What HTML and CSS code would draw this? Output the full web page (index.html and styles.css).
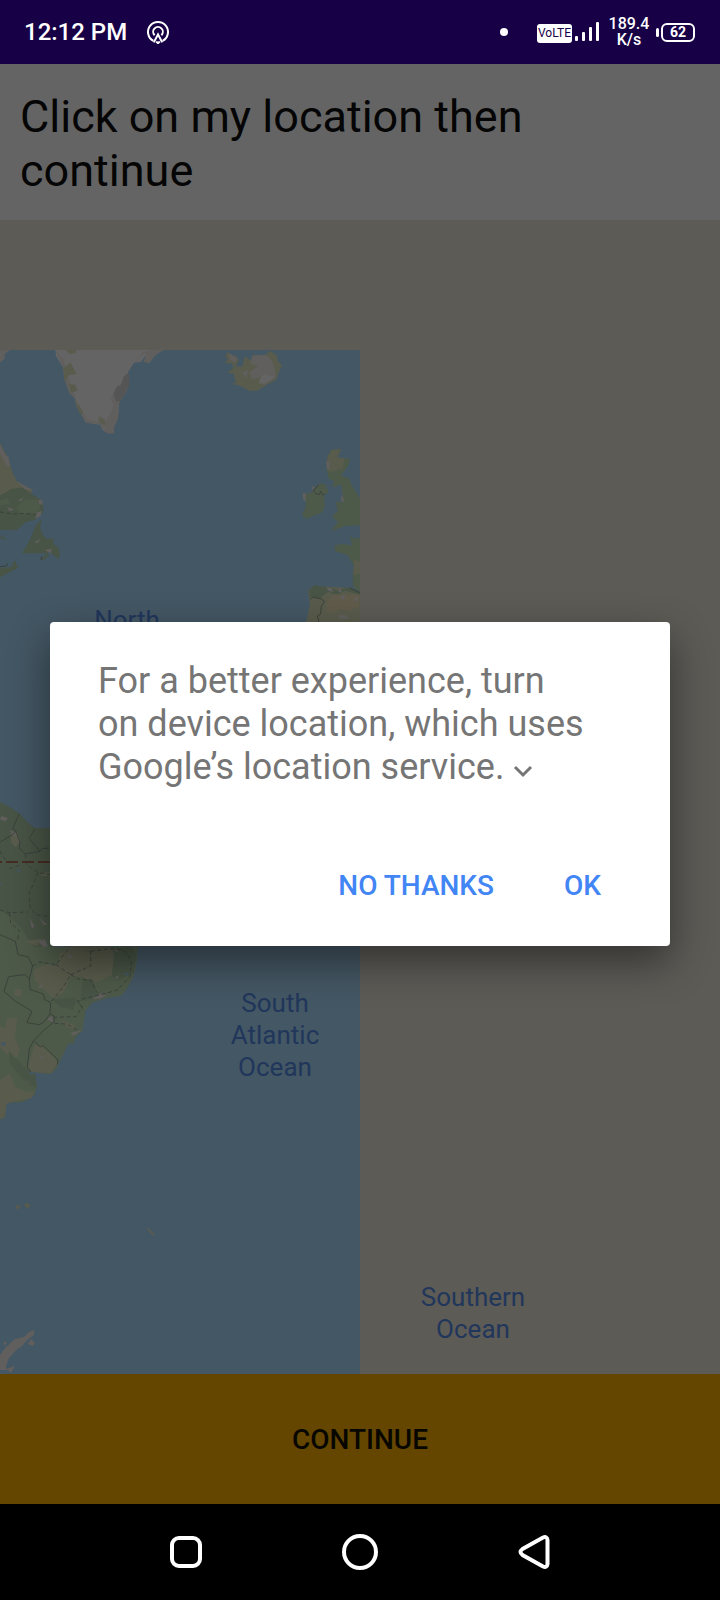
FILE: index.html
```html
<!DOCTYPE html>
<html lang="en">
<head>
<meta charset="utf-8">
<meta name="viewport" content="width=device-width, initial-scale=1">
<title>Choose location</title>
<link rel="stylesheet" href="styles.css">
</head>
<body>
<div class="screen">
  <div class="status">
    <span class="status-time">12:12 PM</span>
    <svg class="status-cast" width="24" height="24" viewBox="0 0 24 24" fill="none" stroke="#fff" stroke-width="2">
      <path d="M7.400 20.800A10 10 0 1 1 16.600 20.800"/>
      <path d="M8.600 15.200A4.800 4.800 0 1 1 15.400 15.200"/>
      <path d="M7.800 22.400 12 14.500l4.200 7.900M10.200 21.600l1.800 1.600 1.800-1.600"/>
    </svg>
    <span class="status-dot"></span>
    <span class="volte">VoLTE</span>
    <svg width="26" height="20" viewBox="0 0 26 20" fill="#fff">
      <rect x="1" y="14" width="3" height="5" rx="1"/><rect x="8" y="10" width="3" height="9" rx="1"/>
      <rect x="15" y="5" width="3" height="14" rx="1"/><rect x="22" y="0" width="3" height="19" rx="1"/>
    </svg>
    <span class="speed">189.4<br>K/s</span>
    <span class="battery"><span class="battery-tip"></span><span class="battery-level">62</span></span>
  </div>

  <main class="app">
    <h1 class="heading">Click on my location then continue</h1>
    <div class="map">
      <svg class="map-art" viewBox="0 220 720 1154" preserveAspectRatio="xMinYMin slice" role="img" aria-label="World map">
        <defs>
          <clipPath id="tile"><rect x="0" y="350" width="360" height="1030"/></clipPath>
        </defs>
        <g clip-path="url(#tile)">
          <rect class="sea" x="0" y="350" width="360" height="1030"/>

          <!-- North Atlantic coasts, three units to the pixel -->
          <g transform="translate(0 340) scale(.33333)">
            <path class="rock" d="M0 30H30L14 42L14 56L0 68Z"/>
            <path class="ice" d="M166 30H490L462 48L448 68L432 66L436 46L424 65L402 68L384 96L388 130L380 152L358 186L356 220L342 260V280H322L308 270L300 254L258 248L244 222L228 196L224 174L208 160L202 124L192 116L190 84L168 48Z"/>
            <path class="rock" d="M166 30L178 52L190 84L194 120L208 160L224 174L230 200L258 248L300 252L322 280H342V262L354 236L357 190L380 152L386 100L374 120L350 148L332 176L342 196L318 244L298 230L292 246L262 240L232 188L216 146L200 98L190 58Z"/>
            <path class="rock-dark" d="M386 98L388 134L372 166L358 184L348 182L340 162L350 140L362 136L372 108Z"/>
            <path class="rock" d="M402 68L424 44L440 38L432 66L448 68L470 42L490 30H460L428 36Z"/>
            <path class="olive" d="M196 30H228V38L210 42ZM190 84L212 68L230 102L206 106L194 126ZM206 132L226 134L232 152L214 158ZM226 186L238 196L250 220L240 222ZM296 228L314 240L316 256L300 248Z"/>

            <path class="olive" d="M682 36L690 42L710 50L716 64L706 78L726 80L736 48L752 62L758 46L798 44L810 32L830 46L834 64L846 76L836 98L828 120L798 136L772 152H750L716 136L694 132L708 128L700 100L682 98L700 84L696 70L674 68L686 56L676 52Z"/>
            <path class="rock" d="M756 48L798 44L812 58L822 78L828 112L796 134L776 130L784 110L756 118L748 96L762 88L774 78L752 72ZM684 38L712 54L706 68L690 60ZM726 98L746 90L738 116Z"/>
            <path class="ice" d="M784 108L798 100L806 108H822L816 118L796 130L776 128Z"/>

            <path class="olive" d="M0 308L12 332L24 352L36 394L50 424L98 450L90 464L0 510Z"/>
            <path class="green-dark" d="M0 466L36 446L70 442L94 462L128 482L130 516L104 540L78 546L50 570H0Z"/>
            <path class="green" d="M50 500L74 480L110 478L122 500L108 520L64 522ZM0 480L22 474L34 490L0 496Z"/>
            <path class="rock" d="M114 480H128V494L118 492ZM110 518L126 512L122 528L106 536ZM52 484L70 472L66 482ZM0 312L16 346L26 350L30 380L18 376L8 356L0 340ZM20 502L42 508L30 514ZM50 424L98 450L74 448Z"/>
            <path class="border dashed" d="M0 516L40 522L76 520L106 524"/>
            <path class="green-dark" d="M108 556L126 536L120 560L126 580L138 596H164L158 610L174 622L180 640L176 658L158 644L150 632L142 640H66L88 604Z"/>
            <path class="rock" d="M102 606L122 596L112 610ZM134 630L156 626L152 640Z"/>
            <path class="green-dark" d="M120 660L142 640L148 646L130 660ZM0 584L22 600L4 596ZM0 684L34 682L44 660L54 684L36 692L0 712Z"/>
            <path class="border" d="M0 680L20 678L22 670M124 650V660"/>

            <path class="green" d="M994 330L1024 326L1012 352L1050 356L1044 378L1024 406L1048 416L1058 442L1080 474V556L1036 558L994 574L1014 546L996 530L1014 512L1006 484L1028 488V462L1024 434L996 442L1002 424L986 416L980 386L982 352Z"/>
            <path class="olive" d="M994 330L1024 326L1012 352L1034 356L1028 386L990 396L980 386L982 352Z"/>
            <path class="rock" d="M978 366L988 362L990 386L982 390ZM1026 460L1032 484L1022 486Z"/>
            <path class="green" d="M940 446L960 430L976 434L986 456L972 466L974 496L968 516L918 536L906 524L916 506L918 482L910 466L938 456Z"/>
            <path class="rock" d="M908 460H918L916 486L910 480ZM936 438L944 442L938 454Z"/>
            <path class="border" d="M956 434L940 452L946 460L958 464L962 454L968 464H974"/>
            <path class="green" d="M1050 588L1062 596L1080 594V756L1060 740L1058 704L1062 676L1042 644L1006 634L1002 618L1024 612L1056 616Z"/>
            <path class="olive" d="M1062 658L1080 666V700L1060 706ZM924 750L944 738L1050 744L1080 758V850H918L930 794Z"/>
            <path class="green-dark" d="M926 750L944 736L984 742L1014 750L1050 742L1080 756V764L1036 752L1010 764L984 756L960 774L930 772Z"/>
            <path class="sand" d="M978 788L1004 762L1048 764L1078 762L1078 800L1050 812L1020 808L1004 820L980 812Z"/>
            <path class="rock" d="M978 742L994 744L1000 756L986 752ZM1018 744L1028 758L1014 754ZM1018 770L1036 764L1032 782ZM1016 824L1040 826L1046 838L1018 836ZM1060 776L1076 768L1070 786Z"/>
            <path class="border" d="M930 778L940 772L962 776L974 784L964 798L962 822L952 828L958 850M1050 744L1080 758"/>
          </g>

          <!-- South America, three units to the pixel -->
          <g transform="translate(0 780) scale(.33333)">
            <path class="green-dark" d="M0 66L18 74L58 100L82 126L104 144H170V500H0Z"/>
            <path class="green" d="M0 390L40 420L60 440L100 500H414L410 550L400 590L378 630L362 648L320 654L276 668L256 692L248 752L228 770L220 792L206 790L170 864L152 882L90 876L112 914L104 944L70 966L18 970L16 1010L0 1020Z"/>
            <path class="olive" d="M180 520L216 498L330 500L348 540L334 586L280 612L250 592L214 588L190 640L160 654L130 628L104 600L102 570L140 552L170 558ZM22 712L52 716L44 770L60 810L44 850L0 800V740L16 744ZM104 794L128 800L162 832L172 850L154 880L94 876L84 860ZM0 900L30 880L46 920L80 936L104 934L96 954L20 970L14 1012L0 1018Z"/>
            <path class="olive" d="M70 484L124 476L112 498ZM30 160L52 156L62 184L46 202L34 190ZM120 280L148 276V288H124ZM46 626L66 628L62 650L42 644ZM180 720L220 734L230 752L200 740Z"/>
            <path class="green-dark" d="M344 506L396 500L410 528L400 580L350 600L336 588ZM250 596L280 600L290 636L320 640L290 656L240 664ZM156 658L230 652L220 690L180 680ZM26 812L78 866L106 884L110 924L90 916L62 892L30 852Z"/>
            <path class="rock" d="M88 414L104 438L96 446ZM118 414L144 436L130 434ZM114 484L134 478L144 498L132 502ZM28 150L54 160L44 170ZM4 108L24 114L16 124L0 118ZM200 520L216 528L208 538ZM112 622L130 610L124 624ZM276 656L304 638L318 646L300 656ZM140 718L156 708L162 728ZM212 758L248 750L220 768ZM72 896L96 914L84 908ZM342 506L358 512L348 516ZM344 592L358 586L352 598ZM124 826L132 834L122 836Z"/>
            <path class="lake" d="M368 576L392 582L380 588ZM48 266L64 272L56 278ZM0 308L10 314H0ZM0 788L16 786V796L8 798ZM84 872L106 880L92 884Z"/>
            <path class="border" d="M0 186L38 164L48 154L60 186L58 204L76 222L120 214L88 176L104 148M48 154L38 146L58 100M120 214L126 206L148 204M0 464L46 484L54 524L84 530L98 558L88 598L90 628L130 642L134 658L152 668L150 702L134 724L118 734L80 728L96 694L44 662L12 634L26 590L74 584L90 598M150 702L162 708V726L132 750L100 784L88 806L82 862L92 876M104 784L122 802L128 796L162 828L174 840L172 854"/>
            <path class="border dashed" d="M76 222L80 254L114 278L150 284M114 278L88 340L90 380L106 404L148 410M0 390L26 398L84 396M28 398L32 430L58 452L52 484M0 212L20 246M28 266L58 256M98 558L118 546L168 554L210 500M168 554L212 584L190 620L154 664M212 584L244 570L272 558L272 516L258 512M212 584L242 600L270 598L290 636M272 514L330 506L370 510L394 540L390 590L352 630L310 642L252 656L232 664L246 680L228 710L164 712M232 662L248 686M164 730L200 732L230 750"/>
          </g>
          <path class="equator" d="M-10 862H60"/>

          <!-- South Atlantic islands and the Antarctic Peninsula -->
          <path class="olive" d="M16 1205L21 1206L17 1210ZM24 1205L27 1203L31 1206L27 1208Z"/>
          <path class="sand" d="M146 1228L149 1229L155 1235L153 1235Z"/>
          <path class="rock" d="M34 1330V1335L27 1340L22 1346L16 1350L9 1358L6 1366V1369L15 1366L11 1373L8 1370H0V1355L6 1347L15 1339L24 1337L29 1332ZM31 1339L35 1343L33 1346L28 1344ZM4 1341L7 1343L4 1346Z"/>
        </g>

        <g class="map-label">
          <text x="127" y="629">North</text>
          <text x="275" y="1012">South</text>
          <text x="275" y="1044">Atlantic</text>
          <text x="275" y="1076">Ocean</text>
          <text x="473" y="1306">Southern</text>
          <text x="473" y="1338">Ocean</text>
        </g>
      </svg>
    </div>
    <button class="continue" type="button">CONTINUE</button>

    <div class="overlay">
      <div class="dialog" role="dialog" aria-modal="true" aria-labelledby="dialog-text">
        <p class="dialog-text" id="dialog-text">For a better experience, turn on device location, which uses Google’s location service.
          <svg class="chevron" width="20" height="14" viewBox="0 0 20 14" fill="none" stroke="#757575" stroke-width="3"><path d="M2 2l8 8 8-8"/></svg></p>
        <div class="dialog-actions">
          <button class="dialog-button" type="button">NO THANKS</button>
          <button class="dialog-button" type="button">OK</button>
        </div>
      </div>
    </div>
  </main>

  <nav class="navbar">
    <button class="nav-button" type="button" aria-label="Recent apps">
      <svg width="40" height="40" viewBox="0 0 40 40"><rect x="6" y="6" width="28" height="28" rx="7"/></svg>
    </button>
    <button class="nav-button" type="button" aria-label="Home">
      <svg width="40" height="40" viewBox="0 0 40 40"><circle cx="20" cy="20" r="16"/></svg>
    </button>
    <button class="nav-button" type="button" aria-label="Back">
      <svg width="40" height="40" viewBox="0 0 40 40"><path d="M8.500 17 29 5.500Q33 4 33.500 8V32Q33 36 29 34.500L8.500 23Q4.500 20 8.500 17Z"/></svg>
    </button>
  </nav>
</div>
</body>
</html>
```
FILE: styles.css
```css
* {
  box-sizing: border-box;
}

body {
  margin: 0;
  font-family: Roboto, "Liberation Sans", sans-serif;
  background: #000;
}

button {
  border: 0;
  padding: 0;
  background: none;
  font-family: inherit;
}

.screen {
  display: flex;
  flex-direction: column;
  min-height: 100vh;
}

.status {
  display: flex;
  align-items: center;
  height: 64px;
  padding: 0 25px 0 24px;
  background: #170046;
  color: #fff;
}

.status-time {
  font-size: 24px;
  font-weight: 500;
}

.status-cast {
  margin-left: 19px;
}

.status-dot {
  width: 8px;
  height: 8px;
  margin-left: auto;
  border-radius: 50%;
  background: #fff;
}

.volte {
  margin: 2px 2px 0 29px;
  width: 35px;
  border-radius: 3px;
  background: #fff;
  color: #170046;
  font-size: 12px;
  line-height: 19px;
  text-align: center;
}

.speed {
  width: 42px;
  margin-left: 8px;
  font-size: 16px;
  font-weight: 500;
  line-height: 16px;
  text-align: center;
}

.battery {
  display: flex;
  align-items: center;
  gap: 2px;
  margin-left: 6px;
}

.battery-tip {
  width: 3px;
  height: 9px;
  border-radius: 2px;
  background: #fff;
}

.battery-level {
  width: 34px;
  border: 2px solid #fff;
  border-radius: 6px;
  font-size: 14px;
  font-weight: 700;
  line-height: 15px;
  text-align: center;
}

.app {
  position: relative;
  display: flex;
  flex: 1;
  flex-direction: column;
}

.heading {
  margin: 0;
  padding: 26px 20px 22px;
  background: #646464;
  color: #050505;
  font-size: 45px;
  font-weight: 400;
  line-height: 54px;
}

.map {
  display: flex;
  flex: 1;
  background: #5d5b56;
}

.map-art {
  width: 100%;
}

.sea,
.lake {
  fill: #445764;
}

.ice {
  fill: #646464;
}

.rock {
  fill: #605f5d;
}

.rock-dark {
  fill: #555555;
}

.sand {
  fill: #605b4b;
}

.olive {
  fill: #595c4c;
}

.green {
  fill: #4e5a49;
}

.green-dark {
  fill: #485445;
}

.border {
  fill: none;
  stroke: #3a413b;
  stroke-width: 3;
}

.dashed {
  stroke-dasharray: 12 8;
}

.equator {
  fill: none;
  stroke: #462d23;
  stroke-width: 2;
  stroke-dasharray: 12 4;
}

.map-label {
  fill: #21365b;
  font-size: 26px;
  text-anchor: middle;
}

.continue {
  height: 130px;
  background: #644600;
  color: #080600;
  font-size: 28px;
  font-weight: 500;
}

.overlay {
  position: absolute;
  inset: 0;
  display: flex;
  align-items: center;
  justify-content: center;
  padding: 0 50px;
}

.dialog {
  width: 100%;
  padding: 38px 48px 25px;
  border-radius: 4px;
  background: #fff;
  box-shadow: 0 16px 40px rgba(0, 0, 0, 0.45);
}

.dialog-text {
  margin: 0;
  padding-right: 32px;
  color: #757575;
  font-size: 36px;
  line-height: 43px;
}

.dialog-actions {
  display: flex;
  justify-content: flex-end;
  gap: 28px;
  margin-top: 60px;
}

.dialog-button {
  height: 72px;
  padding: 0 21px;
  color: #4285f4;
  font-size: 28px;
  font-weight: 500;
}

.navbar {
  display: flex;
  align-items: center;
  justify-content: center;
  gap: 134px;
  height: 96px;
  background: #000;
}

.nav-button {
  width: 40px;
  height: 40px;
}

.nav-button svg {
  display: block;
  fill: none;
  stroke: #fff;
  stroke-width: 4;
}
```
